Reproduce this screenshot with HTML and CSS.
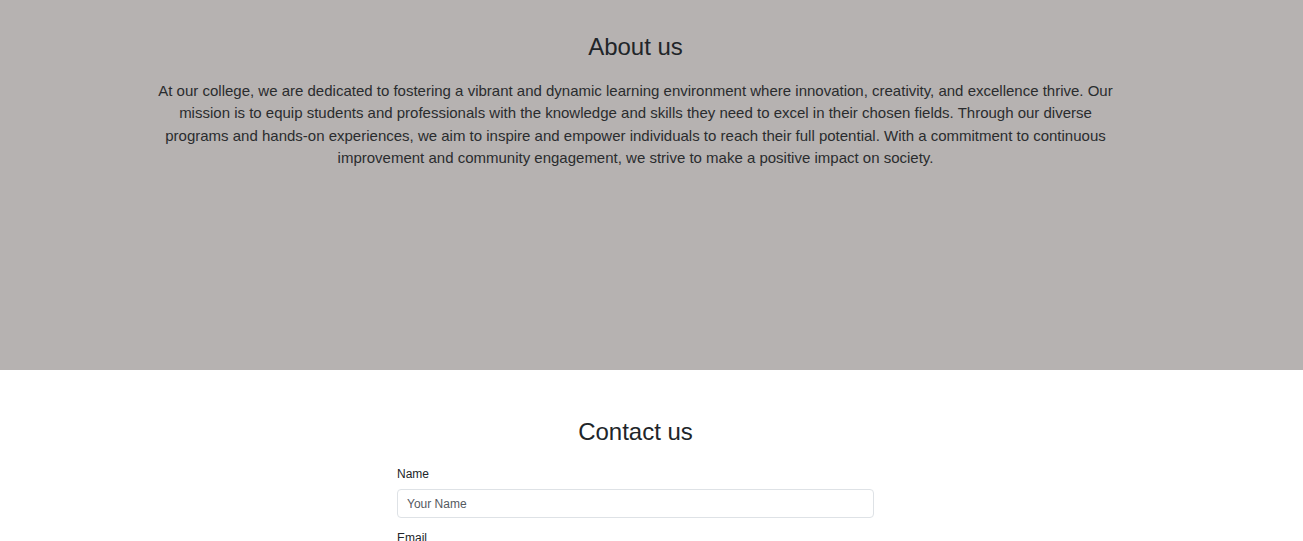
FILE: index.html
```html
<!DOCTYPE html>
<html>
<head>
<meta charset="utf-8">
<link rel="stylesheet" href="styles.css">
</head>
<body>
<section class="about">
  <div class="inner">
    <h2 class="title">About us</h2>
    <p class="about-text">At our college, we are dedicated to fostering a vibrant and dynamic learning environment where innovation, creativity, and excellence thrive. Our mission is to equip students and professionals with the knowledge and skills they need to excel in their chosen fields. Through our diverse programs and hands-on experiences, we aim to inspire and empower individuals to reach their full potential. With a commitment to continuous improvement and community engagement, we strive to make a positive impact on society.</p>
  </div>
</section>
<section class="contact">
  <div class="inner">
    <h2 class="title">Contact us</h2>
    <form class="form">
      <div class="field">
        <label class="label" for="name">Name</label>
        <input class="input" id="name" type="text" placeholder="Your Name">
      </div>
      <div class="field">
        <label class="label" for="email">Email</label>
        <input class="input" id="email" type="email" placeholder="Your Email">
      </div>
    </form>
  </div>
</section>
</body>
</html>
```
FILE: styles.css
```css
html, body {
  margin: 0;
  padding: 0;
  background: #fff;
  overflow: hidden;
}
body {
  font-family: "Liberation Sans", Arial, sans-serif;
  color: #212529;
}
.inner {
  width: 1271px;
  display: flex;
  flex-direction: column;
  align-items: center;
}
.about {
  background: #b6b2b1;
  height: 370px;
  box-sizing: border-box;
  padding-top: 32px;
}
.title {
  margin: 0;
  font-size: 24px;
  font-weight: 400;
  line-height: 30px;
  color: #212529;
  text-align: center;
}
.about-text {
  margin: 18px 0 0;
  width: 960px;
  font-size: 15px;
  line-height: 22.4px;
  text-align: center;
  color: #2a2c2e;
}
.contact {
  padding-top: 47px;
}
.form {
  width: 477px;
  margin-top: 19px;
  display: flex;
  flex-direction: column;
  gap: 12px;
}
.field {
  display: flex;
  flex-direction: column;
}
.label {
  font-size: 12px;
  line-height: 16px;
  margin-bottom: 7px;
  color: #212529;
}
.input {
  height: 29px;
  box-sizing: border-box;
  border: 1px solid #dee2e6;
  border-radius: 4px;
  padding: 0 9px;
  font-family: "Liberation Sans", Arial, sans-serif;
  font-size: 12px;
  color: #212529;
  outline: none;
}
.input::placeholder {
  color: #555a5f;
}
```
